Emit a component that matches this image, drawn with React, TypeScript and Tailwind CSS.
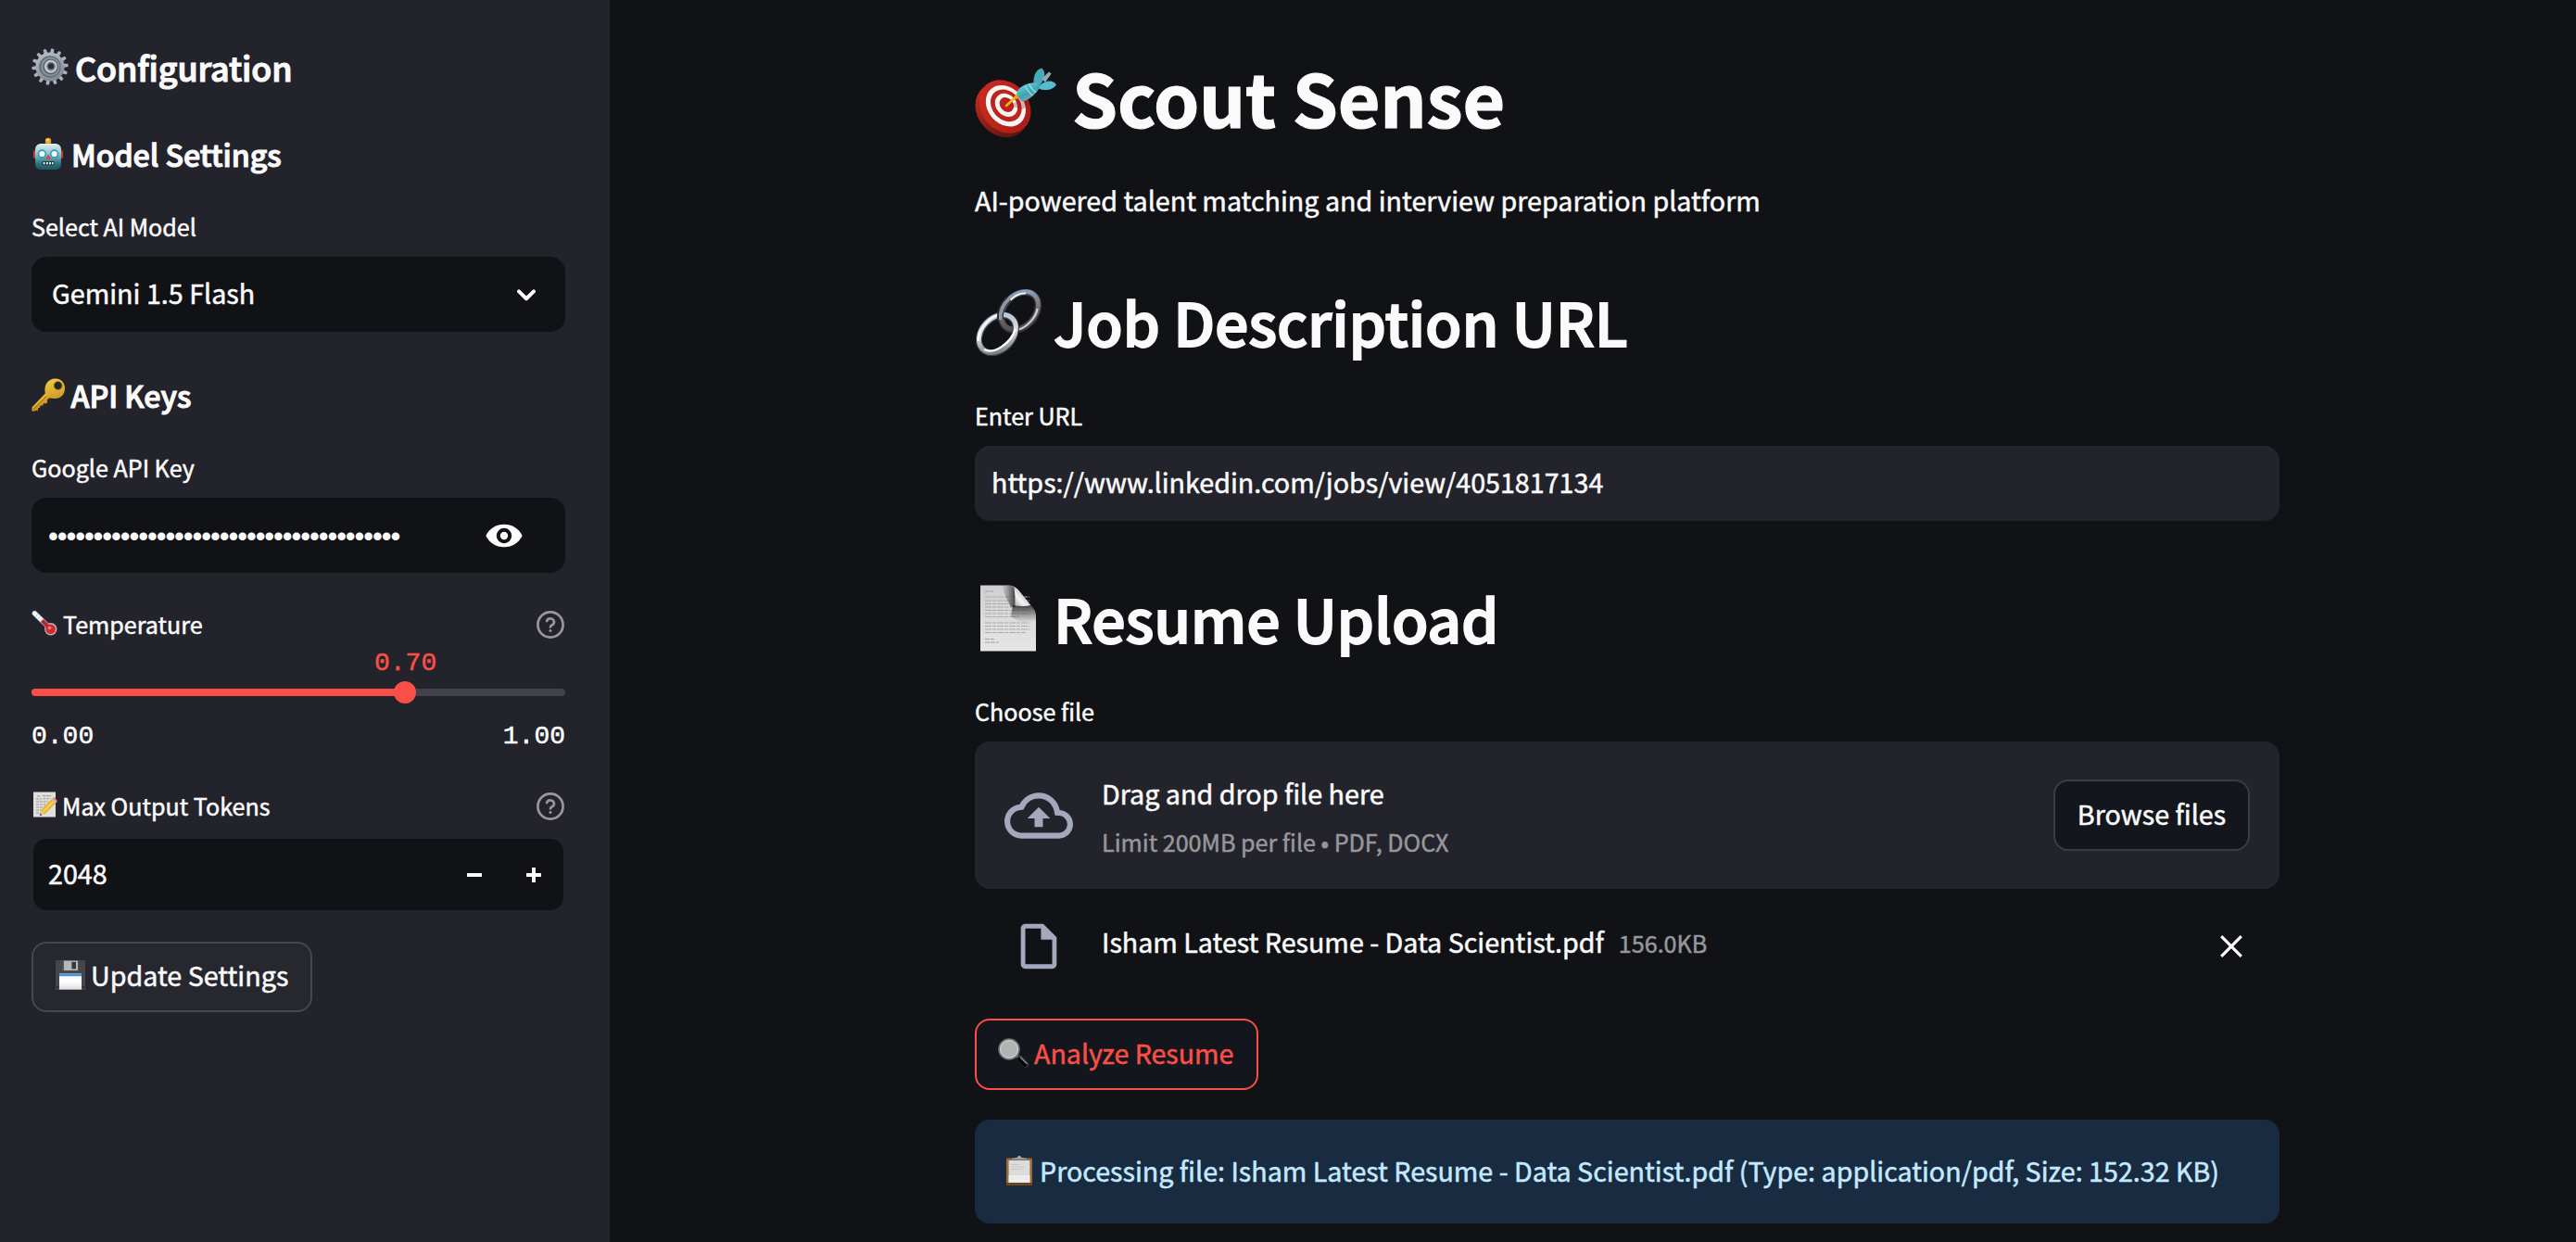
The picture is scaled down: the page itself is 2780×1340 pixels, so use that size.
import React from "react";

const FONT = "font-['Noto_Sans_CJK_JP','Noto_Sans',sans-serif]";

function GearEmoji() {
  const teeth = Array.from({ length: 14 }, (_, i) => (i * 360) / 14);
  return (
    <svg className="h-10 w-10 shrink-0" viewBox="0 0 40 40" aria-hidden="true">
      <defs>
        <linearGradient id="gear-body" x1="0" y1="0" x2="0.4" y2="1">
          <stop offset="0" stopColor="#b9c2cc" />
          <stop offset="1" stopColor="#838b97" />
        </linearGradient>
      </defs>
      {teeth.map((a) => (
        <path key={a} d="M17.9 6 L18.4 0.6 Q20 0 21.6 0.6 L22.1 6 Z" fill="#a9b2bd" transform={`rotate(${a + 8} 20 20)`} />
      ))}
      <circle cx="20" cy="20" r="15.6" fill="url(#gear-body)" />
      <circle cx="20" cy="20" r="11.8" fill="#666d77" />
      <circle cx="20.4" cy="20" r="10.2" fill="#8d949e" />
      <circle cx="20.6" cy="20" r="8.4" fill="#5b616b" />
      <circle cx="20.8" cy="19.8" r="7" fill="#c3cad3" />
      <circle cx="21" cy="19.6" r="4.8" fill="#7a818b" />
      <circle cx="21" cy="19.4" r="3.2" fill="#2c2e36" />
    </svg>
  );
}

function RobotEmoji() {
  return (
    <svg className="h-9 w-9 shrink-0" viewBox="0 0 36 36" aria-hidden="true">
      <defs>
        <linearGradient id="robot-head" x1="0" y1="0" x2="0" y2="1">
          <stop offset="0" stopColor="#dcf2f2" />
          <stop offset="0.4" stopColor="#8fc0c4" />
          <stop offset="0.75" stopColor="#2f7782" />
          <stop offset="1" stopColor="#1c5661" />
        </linearGradient>
      </defs>
      <rect x="2" y="14" width="5" height="9" rx="2" fill="#c2403c" />
      <rect x="29" y="14" width="5" height="9" rx="2" fill="#c2403c" />
      <rect x="14.5" y="4" width="7" height="5" rx="2" fill="#5b4a86" />
      <circle cx="18" cy="4" r="3.2" fill="#f3a81f" />
      <circle cx="17.4" cy="3" r="1.3" fill="#fde28a" />
      <rect x="4" y="7" width="28" height="28" rx="6" fill="url(#robot-head)" />
      <circle cx="11.4" cy="18" r="4.7" fill="#2b9cc4" />
      <circle cx="24.6" cy="18" r="4.7" fill="#2b9cc4" />
      <circle cx="11.4" cy="18" r="3.1" fill="#f4feff" />
      <circle cx="24.6" cy="18" r="3.1" fill="#f4feff" />
      <path d="M18 18.5 L21 23.5 H15 Z" fill="#d04a3c" />
      <rect x="11.5" y="26" width="13" height="4.2" rx="1" fill="#23383f" />
      <path d="M12.7 27 h1.9 v2.2 h-1.9z M15.9 27 h1.9 v2.2 h-1.9z M19 27 h1.9 v2.2 h-1.9z M22 27 h1.6 v2.2 h-1.6z" fill="#e9f3f3" />
    </svg>
  );
}

function KeyEmoji() {
  return (
    <svg className="h-9 w-9 shrink-0" viewBox="0 0 36 36" aria-hidden="true">
      <defs>
        <linearGradient id="key-gold" x1="0" y1="0" x2="0.3" y2="1">
          <stop offset="0" stopColor="#f8d648" />
          <stop offset="1" stopColor="#c38a1c" />
        </linearGradient>
      </defs>
      <path
        fillRule="evenodd"
        fill="url(#key-gold)"
        d="M25 0.5 C31.5 0 36 4.5 36 11 C36 18 31 22.5 24.5 22 C22.5 21.9 20.5 21.6 19 21.5 L16.6 24 L17.4 26.2 L15.2 27.6 L13 27 L12.4 29.6 L9.6 29.6 L9 32 L7.2 32.2 L6.8 35.4 L4.6 34.4 L3.4 35.8 L0.4 35.4 L0.4 31.6 L14.8 16.4 C13 8 17.5 1 25 0.5 Z M28.6 3.6 a4.4 4.4 0 1 0 0.01 0 Z"
      />
      <path d="M2 33.4 L16 19.6" stroke="#8f6314" strokeWidth="1" fill="none" />
      <path d="M1.4 32 L15.8 17.4" stroke="#ffe37a" strokeWidth="0.8" fill="none" />
      <circle cx="28.6" cy="8" r="4.5" fill="none" stroke="#a8781a" strokeWidth="0.9" />
    </svg>
  );
}

function ThermometerEmoji() {
  return (
    <svg className="h-7 w-7 shrink-0" viewBox="0 0 28 28" aria-hidden="true">
      <path d="M3.4 3.8 L20.6 20.4" stroke="#b9cbd9" strokeWidth="5.6" strokeLinecap="round" />
      <circle cx="20.8" cy="20.8" r="6.7" fill="#b9b3bd" />
      <path d="M3.4 3.8 L12 12" stroke="#f4f8fb" strokeWidth="4.2" strokeLinecap="round" />
      <path d="M11.4 11.4 L20 20" stroke="#b8242a" strokeWidth="4.2" />
      <path d="M3.8 7.4 l3.4 -3 M6.4 10 l3.4 -3 M9 12.4 l3.2 -2.8" stroke="#9cc0d3" strokeWidth="0.8" />
      <circle cx="20.6" cy="20.8" r="5.3" fill="#d42a2b" />
      <circle cx="19.6" cy="19.4" r="1.7" fill="#f58b84" />
    </svg>
  );
}

function MemoEmoji() {
  return (
    <svg className="h-7 w-7 shrink-0" viewBox="0 0 28 28" aria-hidden="true">
      <rect x="2" y="0.5" width="24" height="27" fill="#dfdfdc" />
      <path
        d="M6 5h4 M12 4.6h9 M5 8h6 M12.4 7.8h8 M5 11h13 M5 14h11 M5 17h9 M5 20h6 M5 23h4"
        stroke="#9a9a98"
        strokeWidth="1.1"
        strokeDasharray="3 0.8"
      />
      <path d="M9 26 L10.4 20 L21.6 8.2 L26.2 12.4 L14.4 24.2 Z" fill="#eeb32c" />
      <path d="M12.4 22 L24 10.4" stroke="#fbd866" strokeWidth="1.6" />
      <path d="M21.6 8.2 L23 6.8 L27.6 11 L26.2 12.4 Z" fill="#b8bcc2" />
      <path d="M23 6.8 C24.4 5.4 28.6 8.6 27.6 11 Z" fill="#e4675c" />
      <path d="M9 26 L10.4 20 L14.4 24.2 Z" fill="#e6c79a" />
      <path d="M9 26 L9.6 23.4 L11.2 25.2 Z" fill="#2d2d2d" />
    </svg>
  );
}

function FloppyEmoji() {
  return (
    <svg className="h-8 w-8 shrink-0" viewBox="0 0 32 32" aria-hidden="true">
      <defs>
        <linearGradient id="floppy-label" x1="0" y1="0" x2="0" y2="1">
          <stop offset="0" stopColor="#f2f5f9" />
          <stop offset="0.5" stopColor="#ffffff" />
          <stop offset="1" stopColor="#dedede" />
        </linearGradient>
      </defs>
      <rect width="32" height="32" rx="1" fill="#45464a" />
      <rect x="7.5" y="0" width="17" height="11.5" fill="#57585c" />
      <rect x="9" y="0.6" width="15" height="10.4" fill="#b4b7b8" />
      <rect x="17.4" y="1.8" width="4.6" height="7.6" fill="#37383c" />
      <rect x="4" y="14.4" width="24" height="17.2" fill="url(#floppy-label)" />
      <rect x="4" y="14.4" width="24" height="2.8" fill="#4d92d6" />
      <rect x="1" y="28" width="1.6" height="1.8" fill="#222327" />
      <rect x="29.4" y="28" width="1.6" height="1.8" fill="#222327" />
    </svg>
  );
}

function TargetEmoji() {
  return (
    <svg className="h-[76px] w-[88px] shrink-0" viewBox="0 0 88 76" aria-hidden="true">
      <defs>
        <linearGradient id="target-edge" x1="0" y1="0" x2="0" y2="1">
          <stop offset="0" stopColor="#c3271f" />
          <stop offset="1" stopColor="#5e1410" />
        </linearGradient>
        <linearGradient id="target-face" x1="0" y1="0" x2="0.5" y2="1">
          <stop offset="0" stopColor="#cc2c22" />
          <stop offset="1" stopColor="#ab1f17" />
        </linearGradient>
        <linearGradient id="dart-barrel" x1="0" y1="0" x2="0.6" y2="1">
          <stop offset="0" stopColor="#7fdbe6" />
          <stop offset="0.6" stopColor="#3fa3b2" />
          <stop offset="1" stopColor="#8aa6ac" />
        </linearGradient>
      </defs>
      <ellipse cx="29" cy="46" rx="26" ry="31.5" transform="rotate(-41 29 46)" fill="url(#target-edge)" />
      <ellipse cx="32.5" cy="42" rx="25.5" ry="31" transform="rotate(-41 32.5 42)" fill="url(#target-face)" />
      <ellipse cx="33.4" cy="41.2" rx="19.4" ry="24.2" transform="rotate(-41 33.4 41.2)" fill="#f6f5f4" />
      <ellipse cx="33.8" cy="40.8" rx="15.2" ry="18.8" transform="rotate(-41 33.8 40.8)" fill="#bd241c" />
      <ellipse cx="34" cy="40.4" rx="11" ry="13.6" transform="rotate(-41 34 40.4)" fill="#f6f5f4" />
      <ellipse cx="34.4" cy="40" rx="7" ry="8.6" transform="rotate(-41 34.4 40)" fill="#b9231b" />
      <path d="M37 41 L52 45 L60 38 L52 33 Z" fill="#7c1a15" opacity="0.3" />
      <path d="M34 41 L46 30" stroke="#efb71e" strokeWidth="2.4" strokeLinecap="round" />
      <path d="M42 34 L45.5 26.5 L50.5 32.5 Z" fill="#e7ae1a" />
      <path d="M64 20 C62 12 65 2 72 0.5 C77 4 76 11 71 18 Z" fill="#48a9b8" />
      <path d="M72 12 L80 4.5 L82.6 6.6 L76 16 Z" fill="#8ba9ae" />
      <path d="M67 22 C74 14 84 12 88 18.4 C84 24.5 75 25.5 69 22.4 Z" fill="#55bccb" />
      <path d="M45.6 25.4 C51 18 60 16 67.5 16.4 L71 19.6 C68 26 62 33 52.4 36.6 C48 35 45.4 31 45.6 25.4 Z" fill="url(#dart-barrel)" />
      <path d="M54 19.5 C56 23 59 27.4 62.4 30 M58.6 17.6 C60 21 63 24.6 66 26.6" stroke="#8ee3ec" strokeWidth="1.3" fill="none" />
    </svg>
  );
}

function LinkEmoji() {
  return (
    <svg className="h-[72px] w-[71px] shrink-0" viewBox="0 0 71 72" aria-hidden="true">
      <defs>
        <linearGradient id="chain-a" x1="0" y1="0" x2="1" y2="1">
          <stop offset="0" stopColor="#8fb4dd" />
          <stop offset="0.5" stopColor="#77706f" />
          <stop offset="1" stopColor="#4a3e40" />
        </linearGradient>
        <linearGradient id="chain-b" x1="0" y1="0" x2="1" y2="1">
          <stop offset="0" stopColor="#a9bfd8" />
          <stop offset="0.5" stopColor="#d9dde2" />
          <stop offset="1" stopColor="#5f6368" />
        </linearGradient>
      </defs>
      <g fill="none">
        <ellipse cx="47.5" cy="23.5" rx="16.8" ry="23" transform="rotate(43 47.5 23.5)" stroke="#3c3638" strokeWidth="7.2" />
        <ellipse cx="47.5" cy="23.1" rx="16.8" ry="23" transform="rotate(43 47.5 23.1)" stroke="url(#chain-a)" strokeWidth="4.8" />
        <path d="M29 27 C31 14 44 4 54 4.6" stroke="#eaf3fc" strokeWidth="1.9" />
        <path d="M46 43.6 C55 41 65 31 66.6 21" stroke="#d3d5da" strokeWidth="1.9" />
        <ellipse cx="23.4" cy="48.4" rx="16.8" ry="23" transform="rotate(43 23.4 48.4)" stroke="#3b3d42" strokeWidth="7.2" />
        <ellipse cx="23.4" cy="48" rx="16.8" ry="23" transform="rotate(43 23.4 48)" stroke="url(#chain-b)" strokeWidth="5" />
        <path d="M3 56 C1.6 46 13 30 26 27.4" stroke="#f8fbff" strokeWidth="2.2" />
        <path d="M9 65 C20 71 38 58 43 43" stroke="#ffffff" strokeWidth="2.4" />
        <path d="M26.6 33 C25.5 24 30 15.5 36 10" stroke="#2f2b2e" strokeWidth="6.8" />
        <path d="M26.8 33 C25.8 24 30.2 15.5 36.4 10" stroke="#8e97a5" strokeWidth="3.8" />
      </g>
    </svg>
  );
}

function PageEmoji() {
  const lines = [13, 17, 20.5, 24, 27.5, 31, 34.5, 41, 44.5, 48, 51.5];
  return (
    <svg className="h-[72px] w-[60px] shrink-0" viewBox="0 0 60 72" aria-hidden="true">
      <defs>
        <linearGradient id="page-paper" x1="0" y1="0" x2="0" y2="1">
          <stop offset="0" stopColor="#cfcfcf" />
          <stop offset="1" stopColor="#e6e6e6" />
        </linearGradient>
        <linearGradient id="page-shade-left" x1="0" y1="0" x2="1" y2="0">
          <stop offset="0" stopColor="#3a3a3a" stopOpacity="0" />
          <stop offset="1" stopColor="#2a2a2a" stopOpacity="0.85" />
        </linearGradient>
        <linearGradient id="page-shade-down" x1="0" y1="0" x2="0" y2="1">
          <stop offset="0" stopColor="#2a2a2a" stopOpacity="0.85" />
          <stop offset="1" stopColor="#3a3a3a" stopOpacity="0" />
        </linearGradient>
        <linearGradient id="page-curl" x1="0" y1="1" x2="0.7" y2="0.3">
          <stop offset="0" stopColor="#a8a8a8" />
          <stop offset="0.5" stopColor="#f4f4f4" />
          <stop offset="1" stopColor="#bdbdbd" />
        </linearGradient>
      </defs>
      <path d="M0 0.5 H31 Q37 1 41 5.5 L56 24 Q60 29 60 34 V71.5 H0 Z" fill="url(#page-paper)" />
      <path d="M5 7 h10" stroke="#a2a2a2" strokeWidth="1.1" strokeDasharray="4 1" />
      {lines.map((y, i) => (
        <path key={y} d={`M5 ${y} h${i === 6 ? 36 : i === 10 ? 44 : 48}`} stroke="#acacac" strokeWidth="1.1" strokeDasharray="7 1 4 1" />
      ))}
      <path d="M5 58.5 h10 M5 62 h15" stroke="#a2a2a2" strokeWidth="1.1" strokeDasharray="5 1" />
      <path d="M23 0.5 H31 Q36 1 38 5 V24 H33 Q25 10 23 0.5 Z" fill="url(#page-shade-left)" />
      <path d="M35 22 H55 Q60 29 60 34 V38 Q46 44 33 34 Z" fill="url(#page-shade-down)" />
      <path d="M36.5 3 Q39 4 42 7 L54 22 Q49 23.6 37.4 22.6 Q38 12 36.5 3 Z" fill="url(#page-curl)" />
    </svg>
  );
}

function MagnifierEmoji() {
  return (
    <svg className="h-8 w-[34px] shrink-0" viewBox="0 0 34 32" aria-hidden="true">
      <path d="M20 18.6 L24 22.4" stroke="#9a9da1" strokeWidth="3" />
      <path d="M23.4 21.6 L30.2 28.6" stroke="#3b3c40" strokeWidth="6.2" strokeLinecap="round" />
      <path d="M23 22.4 L29.4 29" stroke="#060607" strokeWidth="4" strokeLinecap="round" />
      <path d="M24.4 21 L31 27.6" stroke="#85868a" strokeWidth="1.4" strokeLinecap="round" />
      <circle cx="12" cy="12" r="11" fill="#a6a8aa" stroke="#6d7074" strokeWidth="1.6" />
      <circle cx="12" cy="12" r="9.4" fill="#b2b3b4" stroke="#d3d5d7" strokeWidth="1" />
    </svg>
  );
}

function ClipboardEmoji() {
  return (
    <svg className="h-8 w-7 shrink-0" viewBox="0 0 28 32" aria-hidden="true">
      <rect x="0" y="2.4" width="28" height="29.4" rx="1.4" fill="#9d6a35" />
      <rect x="0" y="29" width="28" height="2.8" rx="1" fill="#6f431c" />
      <rect x="2.6" y="5" width="22.8" height="24" fill="#dcdcdc" />
      <rect x="2.6" y="21" width="22.8" height="8" fill="#ececec" />
      <path d="M5 9.5h9 M5 12h15 M5 14.5h12" stroke="#c2c2c2" strokeWidth="0.9" />
      <path d="M5 4.6 Q5 2.6 8 2.4 L11.6 2 Q12 0 14 0 Q16 0 16.4 2 L20 2.4 Q23 2.6 23 4.6 Z" fill="#a5a8ab" />
      <rect x="5" y="3.6" width="18" height="1.4" fill="#74777a" />
    </svg>
  );
}

function HelpIcon() {
  return (
    <svg className="mt-[3px] h-8 w-8 shrink-0" viewBox="0 0 32 32" fill="none" stroke="#98989c" strokeWidth="2.7" strokeLinecap="round" strokeLinejoin="round" aria-hidden="true">
      <circle cx="16" cy="16" r="13.6" />
      <path d="M12.1 12 a4.1 4.1 0 0 1 7.9 1.4 c0 2.7 -4 3.2 -4 5" />
      <path d="M16 22.4 h0.01" strokeWidth="3" />
    </svg>
  );
}

function EyeIcon() {
  return (
    <svg className="h-[26px] w-10 shrink-0" viewBox="0 0 40 26" aria-hidden="true">
      <path d="M0.4 13 C4 5.2 11.4 0.8 20 0.8 C28.6 0.8 36 5.2 39.6 13 C36 20.8 28.6 25.2 20 25.2 C11.4 25.2 4 20.8 0.4 13 Z" fill="#fafafa" />
      <circle cx="20" cy="13" r="6.2" fill="none" stroke="#111216" strokeWidth="4" />
    </svg>
  );
}

function Label({ children }: { children: React.ReactNode }) {
  return <div className="flex h-10 items-center whitespace-pre text-[25.1px] leading-10">{children}</div>;
}

function SectionTitle({ icon, children }: { icon: React.ReactNode; children: React.ReactNode }) {
  return (
    <h3 className="flex h-[60px] items-center whitespace-pre text-[32.2px] leading-[60px] font-medium tracking-[-0.06px] [-webkit-text-stroke-width:1.1px]">
      {icon}
      {children}
    </h3>
  );
}

function Sidebar() {
  return (
    <aside className="flex h-full w-[658px] shrink-0 flex-col bg-[#23232b] px-[34px] pt-9 pr-12">
      <h2 className="flex h-[72px] items-center text-[35.9px] leading-[72px] font-medium tracking-[-0.12px] [-webkit-text-stroke-width:1.2px]">
        <GearEmoji />
        <span className="ml-[7px]">Configuration</span>
      </h2>

      <div className="mt-7">
        <SectionTitle icon={<RobotEmoji />}>
          <span className="ml-[7px]">Model Settings</span>
        </SectionTitle>
      </div>

      <div className="mt-7">
        <Label>Select AI Model</Label>
      </div>
      <div className="mt-[13px] flex h-[81px] items-center justify-between rounded-2xl bg-[#111216] pr-8 pl-[22px]">
        <span className="-mt-1 text-[28.7px] leading-10">Gemini 1.5 Flash</span>
        <svg className="h-4 w-5" viewBox="0 0 20 16" fill="none" stroke="#fafafa" strokeWidth="4" strokeLinecap="round" strokeLinejoin="round" aria-hidden="true">
          <path d="M2 4.4 L10 12.2 L18 4.4" />
        </svg>
      </div>

      <div className="mt-[38px]">
        <SectionTitle icon={<KeyEmoji />}>
          <span className="ml-[6.5px]">API Keys</span>
        </SectionTitle>
      </div>

      <div className="mt-7">
        <Label>Google API Key</Label>
      </div>
      <div className="mt-[13px] flex h-[81px] items-center justify-between rounded-2xl bg-[#111216] pr-[46px] pl-[17px]">
        <span className="mt-[3px] ml-px font-['Liberation_Sans',sans-serif] text-[31px] leading-10 tracking-[-1.13px] [-webkit-text-stroke-width:0px]">
          {"•".repeat(39)}
        </span>
        <EyeIcon />
      </div>

      <div className="mt-[34px] flex h-10 items-center justify-between">
        <div className="flex items-center">
          <ThermometerEmoji />
          <span className="mt-[2px] ml-[6px] text-[25.1px] leading-10">Temperature</span>
        </div>
        <HelpIcon />
      </div>

      <div className="mt-2 h-8 pl-[370px] font-['Liberation_Mono',monospace] text-[28px] leading-8 text-[#f94f46]">0.70</div>
      <div className="relative mt-[11px] h-2 rounded-full bg-[#42424b]">
        <div className="h-2 w-[70%] rounded-l-full bg-[#f94f46]" />
        <div className="absolute -top-2 left-[70%] h-6 w-6 -translate-x-1/2 rounded-full bg-[#f94f46]" />
      </div>
      <div className="mt-7 flex h-8 justify-between font-['Liberation_Mono',monospace] text-[28px] leading-8">
        <span>0.00</span>
        <span>1.00</span>
      </div>

      <div className="mt-[37px] flex h-10 items-center justify-between">
        <div className="flex items-center">
          <MemoEmoji />
          <span className="mt-[2px] ml-[5px] text-[25.1px] leading-10">Max Output Tokens</span>
        </div>
        <HelpIcon />
      </div>
      <div className="mx-[2px] mt-[17px] flex h-[77px] items-center rounded-[14px] bg-[#111216] pr-6 pl-4">
        <span className="-mt-[3px] grow text-[28.7px] leading-10">2048</span>
        <span className="mr-12 h-1 w-4 bg-[#fafafa]" />
        <svg className="h-4 w-4" viewBox="0 0 16 16" stroke="#fafafa" strokeWidth="4" aria-hidden="true">
          <path d="M0 8 H16 M8 0 V16" />
        </svg>
      </div>

      <button className="mt-[34px] flex h-[76px] w-[303px] items-center rounded-2xl border-2 border-[#47474e] bg-[#27272f] pb-1 pl-6">
        <FloppyEmoji />
        <span className="ml-[6px] whitespace-nowrap text-[28.7px] leading-10">Update Settings</span>
      </button>
    </aside>
  );
}

function Main() {
  return (
    <main className="flex h-full w-[1802px] flex-col pt-[54px] pl-[394px]">
      <h1 className="flex h-[100px] items-center text-[78.8px] leading-[100px] font-bold tracking-[-0.2px] [-webkit-text-stroke-width:1.2px]">
        <div className="mt-[14px]">
          <TargetEmoji />
        </div>
        <span className="ml-[17px]">Scout Sense</span>
      </h1>
      <p className="mt-[38px] h-12 text-[28.67px] leading-[48px]">AI-powered talent matching and interview preparation platform</p>

      <h2 className="mt-[66px] flex h-20 items-center text-[64.3px] leading-[80px] font-medium tracking-[-0.15px] [-webkit-text-stroke-width:1.8px]">
        <div className="mt-1 ml-px">
          <LinkEmoji />
        </div>
        <span className="ml-[13px]">Job Description URL</span>
      </h2>
      <div className="mt-[42px]">
        <Label>Enter URL</Label>
      </div>
      <div className="mt-[13px] flex h-[81px] items-center rounded-2xl bg-[#23232b] pb-[3px] pl-[18px] text-[28.67px] leading-10">
        https://www.linkedin.com/jobs/view/4051817134
      </div>

      <h2 className="mt-16 flex h-20 items-center text-[64.3px] leading-[80px] font-medium tracking-[-0.2px] [-webkit-text-stroke-width:1.8px]">
        <div className="mt-[2px] ml-[6px]">
          <PageEmoji />
        </div>
        <span className="ml-[19px]">Resume Upload</span>
      </h2>
      <div className="mt-[41px]">
        <Label>Choose file</Label>
      </div>
      <div className="mt-[13px] flex h-[159px] items-center rounded-2xl bg-[#23232b] px-8">
        <svg className="h-[74px] w-[74px] shrink-0" viewBox="0 0 24 24" fill="#a3a8bc" aria-hidden="true">
          <path d="M19.35 10.04A7.49 7.49 0 0012 4C9.11 4 6.6 5.64 5.35 8.04A5.994 5.994 0 000 14c0 3.31 2.69 6 6 6h13c2.76 0 5-2.24 5-5 0-2.64-2.05-4.78-4.65-4.96zM19 18H6c-2.21 0-4-1.79-4-4 0-2.05 1.53-3.76 3.56-3.97l1.07-.11.5-.95A5.469 5.469 0 0112 6c2.62 0 4.88 1.86 5.39 4.43l.3 1.5 1.53.11A2.98 2.98 0 0122 15c0 1.65-1.35 3-3 3zM8 13h2.55v3h2.9v-3H16l-4-4-4 4z" />
        </svg>
        <div className="ml-[31px] grow pt-1">
          <div className="text-[28.7px] leading-[52px]">Drag and drop file here</div>
          <div className="text-[25.1px] leading-[52px] text-[#97979b]">Limit 200MB per file • PDF, DOCX</div>
        </div>
        <button className="flex h-[77px] w-[212px] items-center justify-center rounded-2xl border-2 border-[#3a3c44] bg-[#14161e] pb-[3px] text-[28.7px] leading-10">
          Browse files
        </button>
      </div>

      <div className="mt-8 flex h-[60px] items-center pr-10 pl-10">
        <svg className="h-[58px] w-[58px] shrink-0" viewBox="0 0 24 24" fill="#a3a8bc" aria-hidden="true">
          <path d="M14 2H6c-1.1 0-1.99.9-1.99 2L4 20c0 1.1.89 2 1.99 2H18c1.1 0 2-.9 2-2V8l-6-6zM6 20V4h7v5h5v11H6z" />
        </svg>
        <div className="-mt-[10px] ml-[39px] flex grow items-baseline">
          <span className="text-[28.67px] leading-10">Isham Latest Resume - Data Scientist.pdf</span>
          <span className="ml-4 text-[25.1px] leading-10 text-[#97979b]">156.0KB</span>
        </div>
        <svg className="h-6 w-6" viewBox="0 0 24 24" fill="none" stroke="#fafafa" strokeWidth="3.2" aria-hidden="true">
          <path d="M1.2 1.2 L22.8 22.8 M22.8 1.2 L1.2 22.8" />
        </svg>
      </div>

      <button className="mt-12 flex h-[77px] w-[306px] items-center rounded-2xl border-2 border-[#f94f46] bg-[#14161e] pb-1 pl-[23px] text-[#f94f46]">
        <MagnifierEmoji />
        <span className="ml-[5px] whitespace-nowrap text-[28.6px] leading-10">Analyze Resume</span>
      </button>

      <div className="mt-8 flex h-28 items-center rounded-2xl bg-[#182b40] pb-[2px] pl-[34px] text-[#c4e9ff]">
        <ClipboardEmoji />
        <span className="ml-2 whitespace-nowrap text-[28.67px] leading-10">
          Processing file: Isham Latest Resume - Data Scientist.pdf (Type: application/pdf, Size: 152.32 KB)
        </span>
      </div>
    </main>
  );
}

export default function App() {
  return (
    <div className={`flex h-[1340px] w-[2780px] overflow-hidden bg-[#111216] text-[#fafafa] [-webkit-text-stroke-width:0.5px] ${FONT}`}>
      <Sidebar />
      <Main />
    </div>
  );
}
